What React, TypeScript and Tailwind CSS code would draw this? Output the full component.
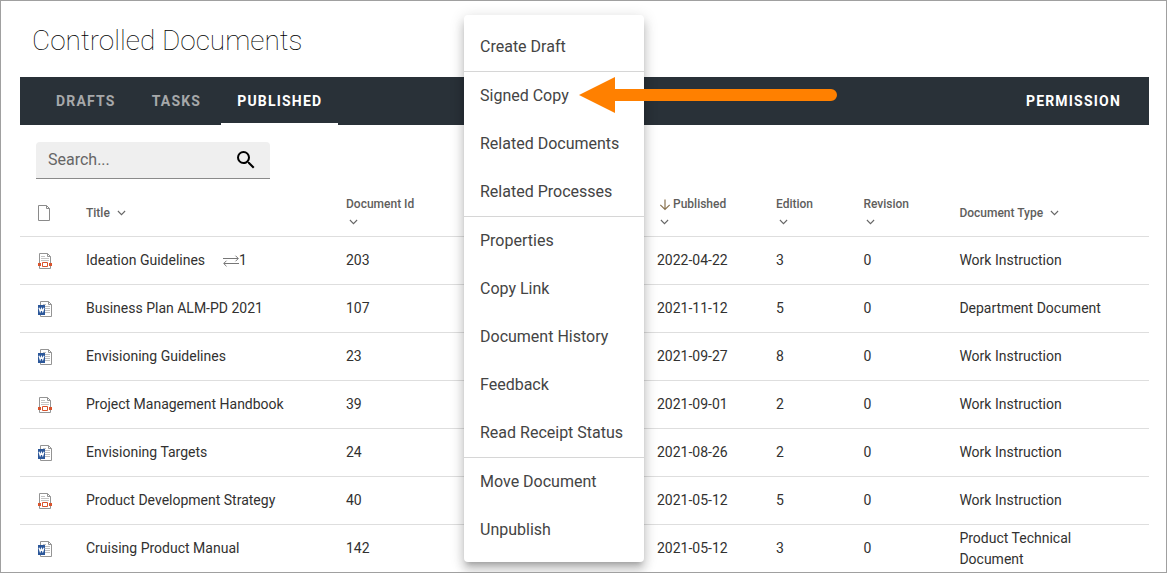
import React from 'react';

type Row = { kind: 'word' | 'form'; title: string; links?: number; id: string; date: string; edition: string; type: string };

const rows: Row[] = [
  { kind: 'form', title: 'Ideation Guidelines', links: 1, id: '203', date: '2022-04-22', edition: '3', type: 'Work Instruction' },
  { kind: 'word', title: 'Business Plan ALM-PD 2021', id: '107', date: '2021-11-12', edition: '5', type: 'Department Document' },
  { kind: 'word', title: 'Envisioning Guidelines', id: '23', date: '2021-09-27', edition: '8', type: 'Work Instruction' },
  { kind: 'form', title: 'Project Management Handbook', id: '39', date: '2021-09-01', edition: '2', type: 'Work Instruction' },
  { kind: 'word', title: 'Envisioning Targets', id: '24', date: '2021-08-26', edition: '2', type: 'Work Instruction' },
  { kind: 'form', title: 'Product Development Strategy', id: '40', date: '2021-05-12', edition: '5', type: 'Work Instruction' },
  { kind: 'word', title: 'Cruising Product Manual', id: '142', date: '2021-05-12', edition: '3', type: 'Product Technical Document' },
];

const menuGroups = [
  ['Create Draft'],
  ['Signed Copy', 'Related Documents', 'Related Processes'],
  ['Properties', 'Copy Link', 'Document History', 'Feedback', 'Read Receipt Status'],
  ['Move Document', 'Unpublish'],
];

const gridCols = 'grid grid-cols-[50px_260px_311px_119px_87.4px_96px_1fr] items-center border-b border-[#dedede] pl-4';

function Chevron({ className = '' }: { className?: string }) {
  return (
    <svg width="9" height="6" viewBox="0 0 9 6" className={className} fill="none" stroke="#666" strokeWidth="1.1">
      <path d="M.9 1 4.500 4.600 8.100 1" />
    </svg>
  );
}

function PageIcon() {
  return (
    <svg width="16" height="17" viewBox="0 0 16 17" fill="none" stroke="#8a8a8a">
      <path d="M2.500 1.500h8l3 3v12h-11zM10.500 1.500v3h3" />
    </svg>
  );
}

function FileIcon({ kind }: { kind: Row['kind'] }) {
  if (kind === 'word') {
    return (
      <svg width="18" height="17" viewBox="0 0 18 17" fill="none">
        <path d="M4.500 1.500h8l3 3v12h-11zM12.500 1.500v3h3" stroke="#949494" />
        <path d="M7 4.500h3M9 6.500h5M9 8.500h5M9 10.500h5M9 12.500h5" stroke="#c0c0c0" />
        <path d="M2 5h7v10H2z" fill="#2b579a" />
        <path d="M3 7.800 4.200 11.500 5.500 8.500 6.800 11.500 8 7.800" stroke="#fff" strokeWidth="1.200" />
      </svg>
    );
  }
  return (
    <svg width="18" height="17" viewBox="0 0 18 17" fill="none">
      <path d="M3.500 1.500h8l3 3v12h-11zM11.500 1.500v3h3" stroke="#949494" />
      <path d="M5 4.500h4M5 6.500h8M5 8.500h8" stroke="#c4c4c4" />
      <path d="M5 9.500h8v6H5z" fill="#fff" />
      <path d="M6.500 10.500h5v4h-5z" stroke="#d9532c" fill="#fff" />
      <path d="M2 11h3v3H2zM13 11h3v3h-3z" fill="#d9532c" />
    </svg>
  );
}

function StackedHead({ label, arrow = false }: { label: string; arrow?: boolean }) {
  return (
    <div className="flex flex-col">
      <span className="flex h-[18px] items-center">
        {arrow && (
          <svg width="12" height="12" viewBox="0 0 12 12" className="ml-[2px] mr-[2px] mt-[2px]" fill="none" stroke="#8a7350" strokeWidth="1.2">
            <path d="M6 .5v10M1.300 5.800l4.700 4.700 4.700-4.700" />
          </svg>
        )}
        {label}
      </span>
      <span className="flex h-[18px] items-center">
        <Chevron className="ml-[3px]" />
      </span>
    </div>
  );
}

export default function App() {
  return (
    <div className="relative flex h-[573px] w-[1167px] flex-col overflow-hidden border border-[#a0a0a0] bg-white pl-[19px] pr-[17px] font-['Roboto',sans-serif] text-[#323130]">
      <h1 className="h-[76px] shrink-0 pl-3 pt-5 text-[28px] leading-[40px] font-thin text-black">Controlled Documents</h1>

      <nav className="flex h-12 shrink-0 items-stretch bg-[#293138] px-5 text-[14px] font-bold tracking-[1.2px] text-[#a6a8aa]">
        <a className="flex items-center px-4">DRAFTS</a>
        <a className="ml-1 flex items-center px-4">TASKS</a>
        <a className="ml-[3.500px] flex items-center border-b-2 border-white pl-[16.500px] pr-[15.500px] pt-[2px] text-white">PUBLISHED</a>
        <a className="ml-auto mr-[8px] flex items-center text-white">PERMISSION</a>
      </nav>

      <div className="ml-4 mt-[17px] flex h-[37px] w-[234px] shrink-0 items-center justify-between rounded-t-[4px] border-b border-[#8a8a8a] bg-[#efefef] pl-3 pr-3">
        <span className="text-[16px] text-[#666]">Search...</span>
        <svg width="24" height="24" viewBox="0 0 24 24" fill="#000">
          <path d="M15.5 14h-.79l-.28-.27A6.471 6.471 0 0 0 16 9.5 6.5 6.5 0 1 0 9.5 16c1.61 0 3.09-.59 4.23-1.57l.27.28v.79l5 4.99L20.49 19l-4.99-5zm-6 0C7.01 14 5 11.99 5 9.5S7.01 5 9.5 5 14 7.01 14 9.5 11.99 14 9.5 14z" />
        </svg>
      </div>

      <div className={`${gridCols} mt-[10px] h-12 shrink-0 text-[12px] font-medium text-[#605e5c]`}>
        <PageIcon />
        <div className="flex items-center gap-[7px]">Title <Chevron /></div>
        <StackedHead label="Document Id" />
        <StackedHead label="Published" arrow />
        <StackedHead label="Edition" />
        <StackedHead label="Revision" />
        <div className="flex items-center gap-[7px]">Document Type <Chevron /></div>
      </div>

      {rows.map((r) => (
        <div key={r.title} className={`${gridCols} h-12 shrink-0 text-[14px] leading-[21px]`}>
          <FileIcon kind={r.kind} />
          <div className="flex items-center">
            {r.title}
            {r.links && (
              <span className="ml-[18px] flex items-center">
                <svg width="16" height="12" viewBox="0 0 16 12" className="mt-px" fill="none" stroke="#777">
                  <path d="M0 3.500h15M12.500 .700l2.800 2.800-2.800 2.800M16 8.500H1M3.500 5.700.700 8.500l2.800 2.800" />
                </svg>
                {r.links}
              </span>
            )}
          </div>
          <div>{r.id}</div>
          <div>{r.date}</div>
          <div>{r.edition}</div>
          <div>0</div>
          <div className="w-[150px]">{r.type}</div>
        </div>
      ))}

      <div className="absolute left-[463px] top-[14px] w-[180px] divide-y divide-[#d6d6d6] rounded-[4px] bg-white py-2 text-[16px] text-[#444] shadow-[0_5px_5px_-3px_rgba(0,0,0,.2),0_8px_10px_1px_rgba(0,0,0,.14),0_3px_14px_2px_rgba(0,0,0,.12)]">
        {menuGroups.map((group) => (
          <ul key={group[0]}>
            {group.map((item) => (
              <li key={item} className="flex h-12 items-center whitespace-nowrap px-4">{item}</li>
            ))}
          </ul>
        ))}
      </div>

      <svg className="absolute left-[578px] top-[76px]" width="260" height="36" viewBox="0 0 260 36" fill="#ff8000">
        <path d="M0 18 36 0v12h216a6 6 0 0 1 0 12H36v12z" />
      </svg>
    </div>
  );
}
